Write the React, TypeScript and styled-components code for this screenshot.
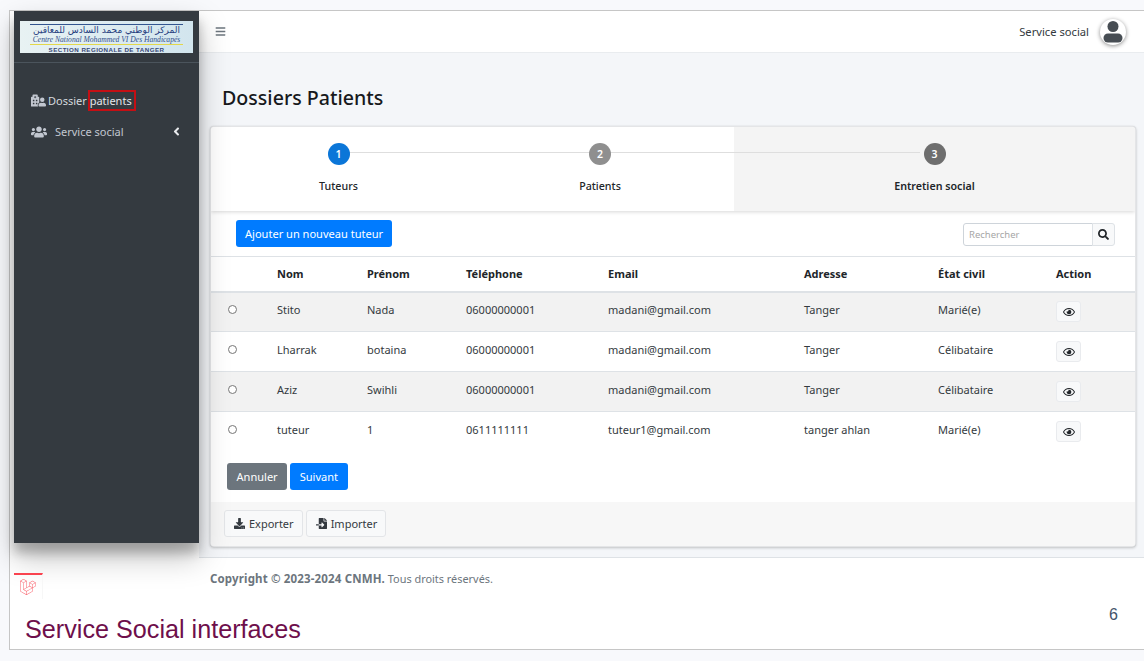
import React from "react";
import styled, { createGlobalStyle } from "styled-components";
import {
  FaBars, FaHospitalUser, FaUsers, FaAngleLeft, FaSearch, FaRegEye, FaDownload, FaFileImport, FaLaravel,
} from "react-icons/fa";

const Global = createGlobalStyle`
  html, body { margin: 0; padding: 0; background: #f8f9fc; overflow: hidden; }
  body { font-family: "Noto Sans", "Liberation Sans", sans-serif; color: #212529; }
  * { box-sizing: border-box; }
`;

const Slide = styled.div`
  margin: 10px 0 0 9px;
  width: 1135px;
  height: 640px;
  background: #fff;
  border: 1px solid #c6c6c6;
  border-right: none;
  display: flex;
  flex-direction: column;
`;
const TopRow = styled.div`
  display: flex;
  height: 589px;
`;
const LeftColumn = styled.div`
  width: 189px;
  padding-left: 4px;
  flex: none;
`;
const Sidebar = styled.aside`
  height: 532px;
  width: 185px;
  background: #343a40;
  box-shadow: 0 14px 28px rgba(0,0,0,.25), 0 10px 10px rgba(0,0,0,.22);
  position: relative;
  z-index: 2;
`;
const Brand = styled.div`
  height: 52px;
  padding: 10px 6px 0;
  border-bottom: 1px solid #4b545c;
`;
const LogoCard = styled.div`
  height: 32px;
  background: linear-gradient(90deg, #e8f2f3, #d2e5ee);
  padding: 3px 10px 0;
  display: flex;
  flex-direction: column;
  align-items: center;
  overflow: hidden;
  white-space: nowrap;
`;
const LogoArabic = styled.div`
  width: 100%;
  border-top: 1px solid #33558f;
  font: 9px/11px "DejaVu Sans", "Noto Sans", sans-serif;
  color: #26407f;
  text-align: center;
  direction: rtl;
`;
const LogoFrench = styled.div`
  width: 100%;
  font: italic 400 7.6px/8px "Liberation Serif", serif;
  color: #33508c;
  text-align: center;
  border-bottom: 1px solid #e3d84a;
`;
const LogoSection = styled.div`
  font: 700 6.2px/9px "Liberation Sans", sans-serif;
  letter-spacing: .45px;
  color: #3a4a78;
`;
const Nav = styled.nav`
  padding-top: 22px;
  display: flex;
  flex-direction: column;
`;
const NavItem = styled.div<{ $gap: number }>`
  height: 31px;
  display: flex;
  align-items: center;
  padding: 0 16px 0 17px;
  gap: ${(p) => p.$gap}px;
  font-size: 11px;
  color: #c2c7d0;
  svg { flex: none; }
`;
const NavText = styled.span<{ $light?: boolean }>`
  color: ${(p) => (p.$light ? "#d5d9df" : "#c2c7d0")};
  white-space: pre;
`;
const Marked = styled.span`
  position: relative;
  color: #e4e6ea;
  &::after {
    content: "";
    position: absolute;
    left: -2px; right: -4px; top: -3px; bottom: -3px;
    border: 2px solid #c40f14;
  }
`;
const Chevron = styled(FaAngleLeft)`
  margin-left: auto;
  color: #e8eaed;
`;
const LaravelTile = styled.div`
  margin-top: 30px;
  width: 29px;
  height: 26px;
  border-top: 2px solid #f9434f;
  border-right: 1px solid #f7f7f7;
  display: flex;
  align-items: center;
  justify-content: center;
  color: #f9606b;
  position: relative;
  z-index: 3;
`;
const Main = styled.main`
  flex: 1;
  min-width: 0;
  display: flex;
  flex-direction: column;
`;
const Topbar = styled.header`
  height: 42px;
  flex: none;
  background: #fff;
  border-bottom: 1px solid #e9ecef;
  display: flex;
  align-items: center;
  padding: 0 18px 0 16px;
  color: #6c757d;
`;
const UserName = styled.span`
  margin-left: auto;
  font-size: 11.2px;
  color: #343a40;
`;
const Avatar = styled.div`
  width: 26px;
  height: 26px;
  border-radius: 50%;
  margin-left: 11px;
  background: #fff;
  box-shadow: 0 1px 4px rgba(0,0,0,.45);
  color: #474d53;
  overflow: hidden;
  svg { display: block; }
`;
const Content = styled.div`
  height: 504px;
  flex: none;
  background: #f4f6f9;
  padding: 30px 8px 0 11px;
`;
const PageTitle = styled.h1`
  margin: 0 0 13px 12px;
  font-size: 19.6px;
  line-height: 30px;
  font-weight: 500;
  color: #17191c;
`;
const Card = styled.section`
  height: 421px;
  background: #fff;
  border: 1px solid #e4e5e7;
  border-radius: 4px;
  box-shadow: 0 0 1px rgba(0,0,0,.125), 0 1px 3px rgba(0,0,0,.2);
  display: flex;
  flex-direction: column;
  overflow: hidden;
`;
const Stepper = styled.div`
  height: 84px;
  flex: none;
  position: relative;
  display: grid;
  grid-template-columns: 255px 268px 1fr;
  box-shadow: 0 1px 4px rgba(0,0,0,.16);
  z-index: 1;
`;
const Connector = styled.div`
  position: absolute;
  left: 137px;
  right: 215px;
  top: 25px;
  height: 1px;
  background: #dedede;
`;
const Step = styled.div<{ $grey?: boolean }>`
  background: ${(p) => (p.$grey ? "#f4f4f4" : "#fff")};
  display: flex;
  flex-direction: column;
  align-items: center;
  padding-top: 16px;
`;
const StepDot = styled.div<{ $color: string }>`
  width: 22px;
  height: 22px;
  border-radius: 50%;
  background: ${(p) => p.$color};
  color: #fff;
  font-size: 10.5px;
  font-weight: 600;
  display: flex;
  align-items: center;
  justify-content: center;
  position: relative;
  z-index: 1;
`;
const StepLabel = styled.div<{ $bold?: boolean }>`
  margin-top: 13px;
  font-size: 10.7px;
  line-height: 16px;
  font-weight: ${(p) => (p.$bold ? 600 : 500)};
  color: #212529;
`;
const Toolbar = styled.div`
  height: 45px;
  flex: none;
  display: flex;
  align-items: center;
  padding: 0 20px 0 25px;
  justify-content: space-between;
`;
const PrimaryButton = styled.button`
  height: 27px;
  padding: 0 9px;
  border: none;
  border-radius: 3px;
  background: #007bff;
  color: #fff;
  font: 400 11.05px "Noto Sans", sans-serif;
`;
const SearchGroup = styled.div`
  display: flex;
  height: 23px;
  margin-top: 1px;
`;
const SearchInput = styled.input`
  width: 130px;
  height: 23px;
  border: 1px solid #ced4da;
  border-radius: 3px 0 0 3px;
  padding: 0 5px;
  font: 9.5px "Noto Sans", sans-serif;
  outline: none;
  &::placeholder { color: #a6a6a6; }
`;
const SearchButton = styled.button`
  width: 23px;
  height: 23px;
  margin-left: -1px;
  border: 1px solid #dee2e6;
  border-radius: 0 3px 3px 0;
  background: #f8f9fa;
  color: #212529;
  display: flex;
  align-items: center;
  justify-content: center;
  padding: 0;
`;
const Table = styled.table`
  width: 100%;
  table-layout: fixed;
  border-collapse: collapse;
  font-size: 11px;
`;
const Th = styled.th<{ $w: number }>`
  width: ${(p) => p.$w}px;
  height: 35px;
  padding: 0 0 0 12px;
  text-align: left;
  font-size: 11px;
  font-weight: 700;
  border-top: 1px solid #dee2e6;
  border-bottom: 2px solid #dee2e6;
`;
const Tr = styled.tr<{ $striped: boolean }>`
  background: ${(p) => (p.$striped ? "#f2f2f2" : "#fff")};
`;
const Td = styled.td`
  height: 40px;
  padding: 0 0 4px 12px;
  border-top: 1px solid #dee2e6;
  color: #343a40;
  white-space: nowrap;
`;
const Radio = styled.input`
  width: 9px;
  height: 9px;
  margin: 0 0 0 5px;
  display: block;
`;
const EyeButton = styled.button`
  width: 25px;
  height: 21px;
  margin-top: 4px;
  border: 1px solid #e9ebee;
  border-radius: 3px;
  background: #f8f9fa;
  color: #212529;
  display: flex;
  align-items: center;
  justify-content: center;
  padding: 0;
`;
const FormActions = styled.div`
  display: flex;
  gap: 3px;
  padding: 11px 0 0 16px;
  flex: 1;
`;
const ActionButton = styled.button<{ $bg: string }>`
  height: 27px;
  padding: 0 9.5px;
  border: none;
  border-radius: 3px;
  background: ${(p) => p.$bg};
  color: #fff;
  font: 400 11.05px "Noto Sans", sans-serif;
`;
const CardFooter = styled.div`
  height: 44px;
  flex: none;
  background: #f7f7f7;
  padding: 8px 13px 0;
  display: flex;
  gap: 3px;
`;
const GhostButton = styled.button`
  height: 27px;
  padding: 0 8px 0 9px;
  border: 1px solid #e3e5e8;
  border-radius: 3px;
  background: #f8f9fa;
  color: #343a40;
  font: 11px "Noto Sans", sans-serif;
  display: flex;
  align-items: center;
  gap: 4px;
`;
const Copyright = styled.footer`
  flex: 1;
  background: #fff;
  padding: 13px 0 0 11px;
  font-size: 10.9px;
  line-height: 16px;
  color: #6c757d;
  border-top: 1px solid #dee2e6;
  b { font-weight: 700; color: #6c757d; font-size: 11.5px; letter-spacing: .15px; }
`;
const BottomRow = styled.div`
  flex: 1;
  display: flex;
  justify-content: space-between;
  align-items: flex-start;
  padding: 0 26px 0 15px;
  font-family: "Liberation Sans", sans-serif;
`;
const SlideTitle = styled.div`
  margin-top: 14px;
  font-size: 25.2px;
  line-height: 30px;
  color: #6e0f4b;
`;
const PageNumber = styled.div`
  font-size: 16px;
  line-height: 20px;
  margin-top: 5px;
  color: #44546a;
`;

const rows = [
  ["Stito", "Nada", "06000000001", "madani@gmail.com", "Tanger", "Marié(e)"],
  ["Lharrak", "botaina", "06000000001", "madani@gmail.com", "Tanger", "Célibataire"],
  ["Aziz", "Swihli", "06000000001", "madani@gmail.com", "Tanger", "Célibataire"],
  ["tuteur", "1", "0611111111", "tuteur1@gmail.com", "tanger ahlan", "Marié(e)"],
];
const columns: [string, number][] = [
  ["", 54], ["Nom", 90], ["Prénom", 99], ["Téléphone", 142], ["Email", 196], ["Adresse", 134], ["État civil", 118], ["Action", 91],
];

export default function App() {
  return (
    <>
      <Global />
      <Slide>
        <TopRow>
          <LeftColumn>
            <Sidebar>
              <Brand>
                <LogoCard>
                  <LogoArabic>المركز الوطني محمد السادس للمعاقين</LogoArabic>
                  <LogoFrench>Centre National Mohammed VI Des Handicapés</LogoFrench>
                  <LogoSection>SECTION REGIONALE DE TANGER</LogoSection>
                </LogoCard>
              </Brand>
              <Nav>
                <NavItem $gap={2}>
                  <FaHospitalUser size={15} />
                  <NavText $light>Dossier <Marked>patients</Marked></NavText>
                </NavItem>
                <NavItem $gap={8}>
                  <FaUsers size={16} />
                  <NavText>Service social</NavText>
                  <Chevron size={13} />
                </NavItem>
              </Nav>
            </Sidebar>
            <LaravelTile><FaLaravel size={16} /></LaravelTile>
          </LeftColumn>
          <Main>
            <Topbar>
              <FaBars size={11} />
              <UserName>Service social</UserName>
              <Avatar>
                <svg width="26" height="26" viewBox="0 0 26 26" fill="currentColor" aria-hidden="true">
                  <circle cx="13" cy="7.5" r="5.5" />
                  <rect x="3.5" y="14.5" width="19" height="9" rx="4.5" />
                </svg>
              </Avatar>
            </Topbar>
            <Content>
              <PageTitle>Dossiers Patients</PageTitle>
              <Card>
                <Stepper>
                  <Connector />
                  <Step>
                    <StepDot $color="#0b76d8">1</StepDot>
                    <StepLabel>Tuteurs</StepLabel>
                  </Step>
                  <Step>
                    <StepDot $color="#8f8f8f">2</StepDot>
                    <StepLabel>Patients</StepLabel>
                  </Step>
                  <Step $grey>
                    <StepDot $color="#6e6e6e">3</StepDot>
                    <StepLabel $bold>Entretien social</StepLabel>
                  </Step>
                </Stepper>
                <Toolbar>
                  <PrimaryButton>Ajouter un nouveau tuteur</PrimaryButton>
                  <SearchGroup>
                    <SearchInput placeholder="Rechercher" />
                    <SearchButton><FaSearch size={11} /></SearchButton>
                  </SearchGroup>
                </Toolbar>
                <Table>
                  <thead>
                    <tr>{columns.map(([c, w]) => <Th key={c} $w={w}>{c}</Th>)}</tr>
                  </thead>
                  <tbody>
                    {rows.map((r, i) => (
                      <Tr key={i} $striped={i % 2 === 0}>
                        <Td><Radio type="radio" name="tuteur" /></Td>
                        {r.map((v, j) => <Td key={j}>{v}</Td>)}
                        <Td><EyeButton><FaRegEye size={12} /></EyeButton></Td>
                      </Tr>
                    ))}
                  </tbody>
                </Table>
                <FormActions>
                  <ActionButton $bg="#6c757d">Annuler</ActionButton>
                  <ActionButton $bg="#007bff">Suivant</ActionButton>
                </FormActions>
                <CardFooter>
                  <GhostButton><FaDownload size={11} />Exporter</GhostButton>
                  <GhostButton><FaFileImport size={11} />Importer</GhostButton>
                </CardFooter>
              </Card>
            </Content>
            <Copyright><b>Copyright © 2023-2024 CNMH.</b> Tous droits réservés.</Copyright>
          </Main>
        </TopRow>
        <BottomRow>
          <SlideTitle>Service Social interfaces</SlideTitle>
          <PageNumber>6</PageNumber>
        </BottomRow>
      </Slide>
    </>
  );
}
